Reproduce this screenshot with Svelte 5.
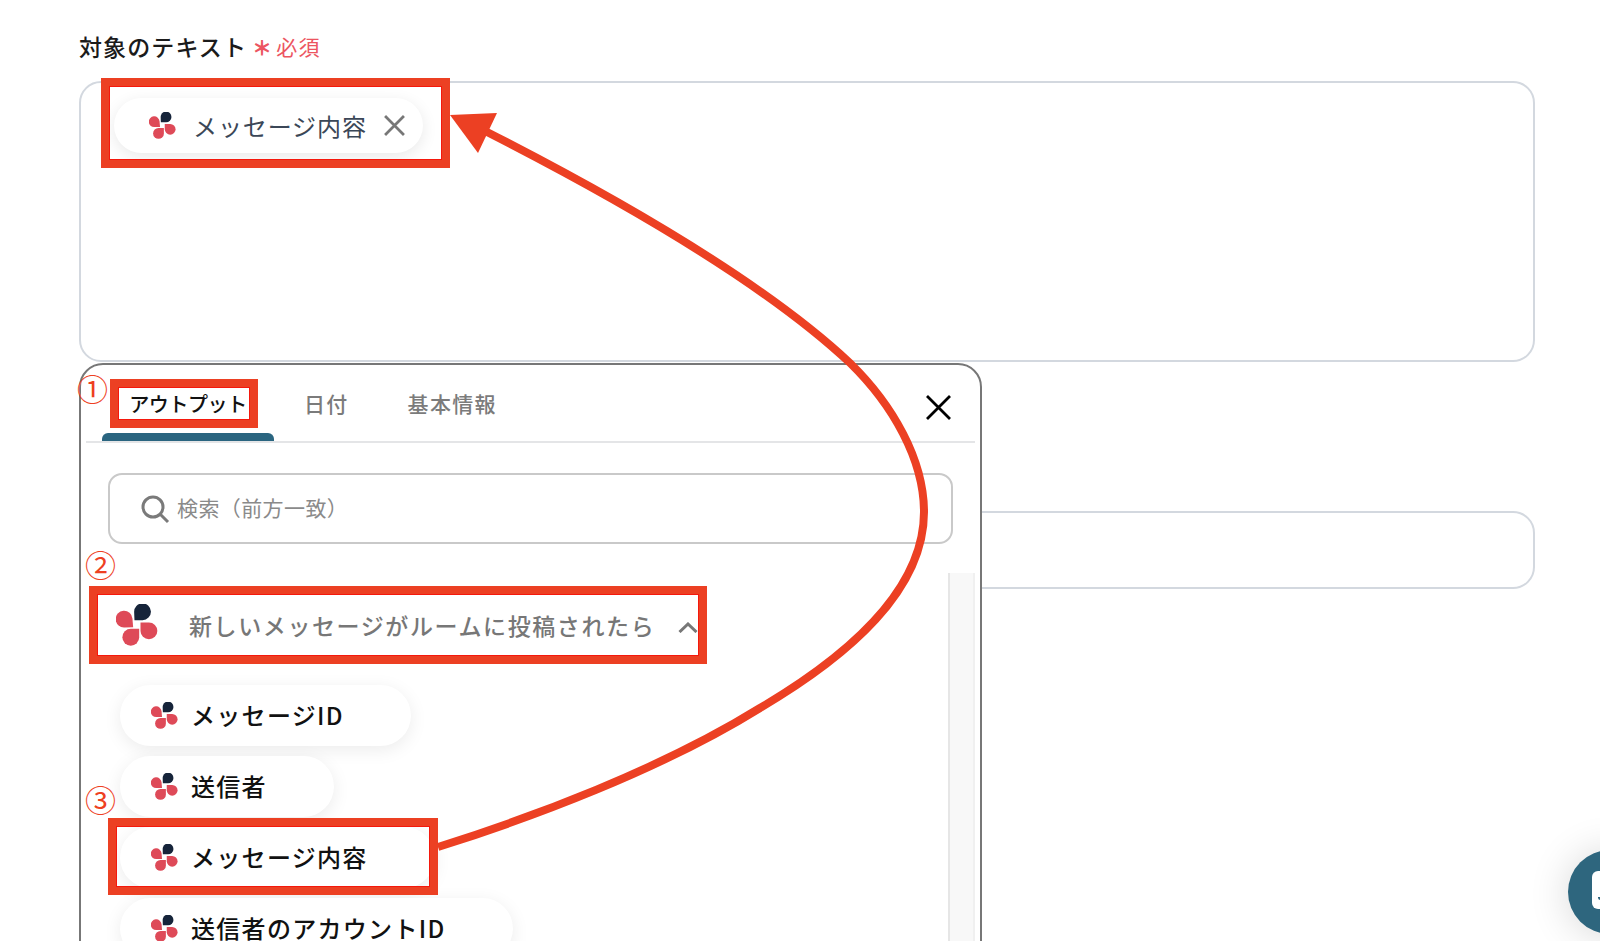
<script>
  // petal = circle plus a tip, outer tangents give the teardrop
  function petal(cx, cy, r, tx, ty) {
    const dx = tx - cx
    const dy = ty - cy
    const d = Math.hypot(dx, dy)
    const a = Math.atan2(dy, dx)
    const b = Math.acos(r / d)
    const x1 = cx + r * Math.cos(a - b)
    const y1 = cy + r * Math.sin(a - b)
    const x2 = cx + r * Math.cos(a + b)
    const y2 = cy + r * Math.sin(a + b)
    return `M${tx} ${ty}L${x1.toFixed(1)} ${y1.toFixed(1)}A${r} ${r} 0 1 0 ${x2.toFixed(1)} ${y2.toFixed(1)}Z`
  }

  const redPetals = [petal(24, 45, 25, 51, 69), petal(44, 99, 25, 69, 74), petal(98, 80, 25, 73, 55)]
  const navyPetal = petal(79, 23, 25, 55, 48)

  const chips = ['メッセージID', '送信者', 'メッセージ内容', '送信者のアカウントID']
</script>

{#snippet logo(cls)}
  <svg class={cls} viewBox="0 0 125 125">
    {#each redPetals as d}
      <path {d} fill="#de4a58" />
    {/each}
    <path d={navyPetal} fill="#16243a" />
  </svg>
{/snippet}

<div class="page">
  <section class="field">
    <div class="label">
      <span>対象のテキスト</span>
      <span class="required"><i>＊</i>必須</span>
    </div>
    <div class="textarea">
      <div class="chip-top">
        {@render logo('logo-sm')}
        <span class="chip-top-text">メッセージ内容</span>
        <svg class="chip-x" viewBox="0 0 20 20"><path d="M1 1L19 19M19 1L1 19" /></svg>
      </div>
    </div>
  </section>

  <section class="field second">
    <div class="input"></div>
  </section>

  <div class="panel">
    <div class="tabs">
      <div class="tab active">アウトプット</div>
      <div class="tab">日付</div>
      <div class="tab">基本情報</div>
      <svg class="close" viewBox="0 0 25 25"><path d="M1 1L24 24M24 1L1 24" /></svg>
    </div>

    <div class="search">
      <svg class="search-icon" viewBox="0 0 28 28">
        <circle cx="12" cy="12" r="10" />
        <path d="M19.5 19.5L27 27" />
      </svg>
      <span>検索（前方一致）</span>
    </div>

    <div class="group">
      {@render logo('logo-lg')}
      <span class="group-title">新しいメッセージがルームに投稿されたら</span>
      <svg class="chevron" viewBox="0 0 20 11"><path d="M1.5 10L10 2L18.5 10" /></svg>
    </div>

    <div class="chips">
      {#each chips as chip}
        <div class="chip">
          {@render logo('logo-sm')}
          <span>{chip}</span>
        </div>
      {/each}
    </div>

    <div class="scrollbar"></div>
  </div>

  <div class="chat">
    <div class="chat-icon"><span></span></div>
  </div>

  <!-- annotations drawn over the screenshot -->
  <div class="mark mark-chip"></div>
  <div class="mark mark-tab"></div>
  <div class="mark mark-group"></div>
  <div class="mark mark-item"></div>
  <span class="num num-1">①</span>
  <span class="num num-2">②</span>
  <span class="num num-3">③</span>

  <svg class="arrow" viewBox="0 0 1600 941">
    <path class="arrow-line" d="M438 847C530 818 660 770 760 708C850 655 924 590 924 512C924 460 893 405 850 363C770 288 640 210 487 132" />
    <path class="arrow-head" d="M450 115L497 113L478 153Z" />
  </svg>
</div>

<style>
  :global(body) {
    margin: 0;
    background: #fff;
  }

  .page {
    position: relative;
    height: 941px;
    overflow: hidden;
    padding-left: 79px;
    box-sizing: border-box;
    font-family: "Noto Sans CJK JP", "Noto Sans", sans-serif;
    color: #1b1b1b;
  }

  .field {
    width: 1456px;
  }

  .label {
    display: flex;
    align-items: center;
    height: 30px;
    padding-top: 31px;
    font-size: 23px;
    font-weight: 500;
    letter-spacing: 1.1px;
    line-height: 30px;
  }

  .required {
    display: flex;
    align-items: center;
    margin-left: 5px;
    font-size: 21px;
    font-weight: 400;
    letter-spacing: 1.2px;
    color: #ec5561;
  }

  .required i {
    font-style: normal;
    font-size: 20px;
    font-weight: 900;
    margin-right: 3px;
    transform: translateY(2px);
  }

  .textarea {
    box-sizing: border-box;
    height: 281px;
    margin-top: 20px;
    padding: 15px 33px;
    border: 2px solid #d3d8df;
    border-radius: 22px;
  }

  .chip-top {
    display: inline-flex;
    align-items: center;
    box-sizing: border-box;
    width: 309px;
    height: 55px;
    padding-left: 35px;
    padding-bottom: 1px;
    border-radius: 28px;
    background: #fff;
    box-shadow: 0 4px 16px rgba(0, 0, 0, 0.09);
  }

  .chip-top-text {
    margin-left: 17px;
    font-size: 24px;
    letter-spacing: 0.9px;
    color: #3b4757;
    white-space: nowrap;
  }

  .chip-x {
    width: 21px;
    height: 21px;
    margin-left: 17px;
    fill: none;
    stroke: #777;
    stroke-width: 2.6;
  }

  .second {
    margin-top: 149px;
  }

  .input {
    box-sizing: border-box;
    height: 78px;
    border: 2px solid #d3d8df;
    border-radius: 22px;
  }

  .logo-sm {
    flex: none;
    width: 27px;
    height: 27px;
  }

  .logo-lg {
    flex: none;
    width: 42px;
    height: 42px;
  }

  .panel {
    position: absolute;
    left: 79px;
    top: 363px;
    box-sizing: border-box;
    width: 903px;
    height: 620px;
    border: 2px solid #777;
    border-radius: 24px;
    background: #fff;
  }

  .tabs {
    position: relative;
    display: flex;
    align-items: stretch;
    height: 78px;
    margin: 0 5px;
    padding-left: 16px;
    box-sizing: border-box;
    border-bottom: 2px solid #e4e5e7;
  }

  .tab {
    display: flex;
    align-items: center;
    padding: 0 29px 0 30px;
    font-size: 21px;
    font-weight: 500;
    letter-spacing: 1.3px;
    color: #7b7b7b;
    white-space: nowrap;
  }

  .tab.active {
    position: relative;
    justify-content: center;
    width: 172px;
    padding: 0;
    box-sizing: border-box;
    font-size: 20px;
    color: #111;
    font-weight: 500;
    letter-spacing: -0.4px;
  }

  .tab.active::after {
    content: '';
    position: absolute;
    left: 0;
    right: 0;
    bottom: 0;
    height: 8px;
    border-radius: 6px 6px 0 0;
    background: #2a6580;
  }

  .close {
    position: absolute;
    left: 840px;
    top: 30px;
    width: 25px;
    height: 25px;
    fill: none;
    stroke: #000;
    stroke-width: 2.8;
  }

  .search {
    display: flex;
    align-items: center;
    box-sizing: border-box;
    width: 845px;
    height: 71px;
    margin: 30px 0 0 27px;
    padding-left: 31px;
    border: 2px solid #c9c9c9;
    border-radius: 14px;
    font-size: 21px;
    letter-spacing: 0.4px;
    color: #8a8a8a;
    white-space: nowrap;
  }

  .search span {
    margin-top: -3px;
  }

  .search-icon {
    flex: none;
    width: 28px;
    height: 28px;
    margin-right: 8px;
    fill: none;
    stroke: #7a7a7a;
    stroke-width: 3;
    overflow: visible;
  }

  .group {
    display: flex;
    align-items: center;
    height: 42px;
    margin: 60px 0 0 35px;
  }

  .group-title {
    margin-left: 31px;
    font-size: 23px;
    font-weight: 500;
    letter-spacing: 1.6px;
    color: #777;
    white-space: nowrap;
  }

  .chevron {
    flex: none;
    width: 20px;
    height: 11px;
    margin: 4px 0 0 23px;
    fill: none;
    stroke: #777;
    stroke-width: 3;
  }

  .chips {
    display: flex;
    flex-direction: column;
    align-items: flex-start;
    gap: 10px;
    margin: 39px 0 0 39px;
  }

  .chip {
    display: flex;
    align-items: center;
    box-sizing: border-box;
    height: 61px;
    padding: 0 67px 0 31px;
    border-radius: 31px;
    background: #fff;
    box-shadow: 0 4px 18px rgba(0, 0, 0, 0.08);
    font-size: 24px;
    font-weight: 500;
    letter-spacing: 1.3px;
    color: #111;
    white-space: nowrap;
  }

  .chip span {
    margin-left: 13px;
    margin-top: -2px;
  }

  .scrollbar {
    position: absolute;
    left: 867px;
    top: 208px;
    bottom: 0;
    width: 27px;
    box-sizing: border-box;
    background: #f8f8f8;
    border-left: 2px solid #e6e6e6;
    border-right: 2px solid #f0f0f0;
  }

  .chat {
    position: absolute;
    left: 1568px;
    top: 850px;
    width: 84px;
    height: 84px;
    border-radius: 50%;
    background: #2e667e;
    box-shadow: 0 2px 40px rgba(0, 0, 0, 0.16);
  }

  .chat-icon {
    position: absolute;
    left: 24px;
    top: 21px;
    width: 40px;
    height: 38px;
    border-radius: 6px;
    background: #fff;
  }

  .chat-icon span {
    position: absolute;
    left: 6px;
    top: 26px;
    width: 5px;
    height: 3px;
    border-radius: 0 0 3px 3px;
    background: #2e667e;
  }

  .mark {
    position: absolute;
    box-sizing: border-box;
    border: 8px solid #ec4023;
    box-shadow: inset 0 0 0 1px #f5180c;
  }

  .mark-chip {
    left: 101px;
    top: 78px;
    width: 349px;
    height: 90px;
  }

  .mark-tab {
    left: 110px;
    top: 379px;
    width: 148px;
    height: 49px;
  }

  .mark-group {
    left: 89px;
    top: 586px;
    width: 618px;
    height: 78px;
  }

  .mark-item {
    left: 108px;
    top: 818px;
    width: 330px;
    height: 77px;
  }

  .num {
    position: absolute;
    font-family: "Noto Sans CJK JP", sans-serif;
    font-size: 31px;
    line-height: 31px;
    color: #ee4022;
  }

  .num-1 {
    left: 77px;
    top: 372px;
  }

  .num-2 {
    left: 85px;
    top: 548px;
  }

  .num-3 {
    left: 85px;
    top: 783px;
  }

  .arrow {
    position: absolute;
    left: 0;
    top: 0;
    width: 1600px;
    height: 941px;
    pointer-events: none;
  }

  .arrow-line {
    fill: none;
    stroke: #ec4023;
    stroke-width: 8;
  }

  .arrow-head {
    fill: #ec4023;
  }
</style>
